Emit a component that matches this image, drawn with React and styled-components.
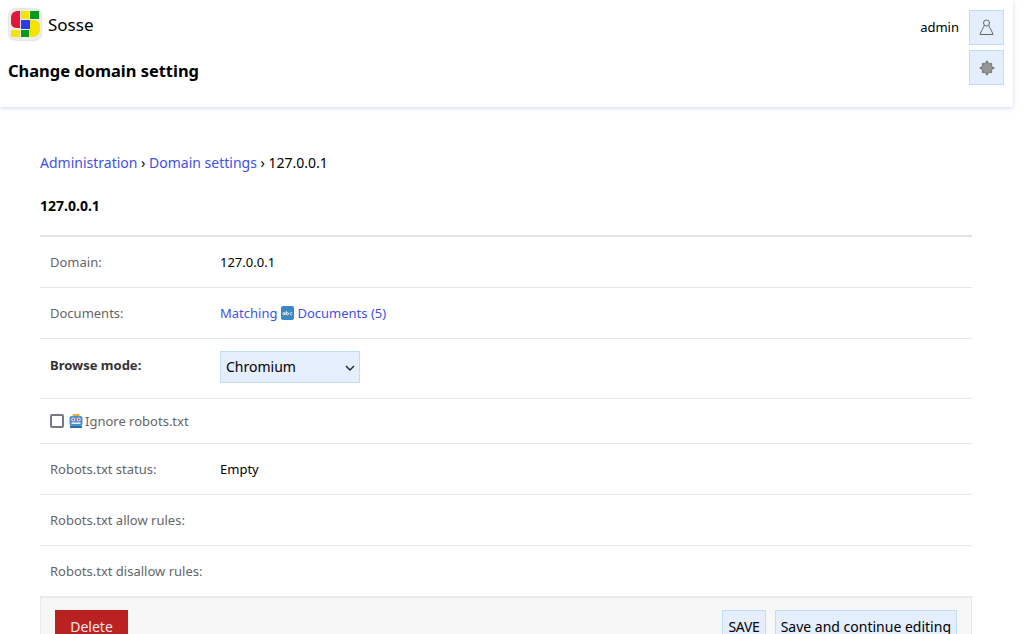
import React from "react";
import styled, { createGlobalStyle } from "styled-components";

const GlobalStyle = createGlobalStyle`
  html, body {
    margin: 0;
    height: 634px;
    overflow: hidden;
    background: #fff;
    font-family: "Noto Sans", sans-serif;
    color: #000;
  }
`;

const Page = styled.div`
  width: 1013px;
`;

const Header = styled.header`
  height: 107px;
  box-sizing: border-box;
  padding: 8px 9px 0 8px;
  display: flex;
  justify-content: space-between;
  align-items: flex-start;
  background: #fff;
  box-shadow: 0 1px 4px rgba(170, 180, 225, 0.55);
`;

const Brand = styled.div`
  display: flex;
  flex-direction: column;
`;

const BrandRow = styled.div`
  display: flex;
  align-items: center;
  gap: 6px;
  height: 32px;
  font-size: 17px;
`;

const LogoMark = styled.svg`
  filter: drop-shadow(0 0 1px #b8b8b8);
`;

const Title = styled.h1`
  margin: 20px 0 0;
  font-size: 16.45px;
  line-height: 22px;
  font-weight: 700;
`;

const Tools = styled.div`
  display: grid;
  grid-template-columns: auto 35px;
  column-gap: 10px;
  row-gap: 5px;
  align-items: center;
  margin-top: 2px;
  font-size: 13px;
`;

const UserName = styled.span`
  margin-bottom: 1px;
`;

const IconButton = styled.div`
  grid-column: 2;
  width: 35px;
  height: 35px;
  box-sizing: border-box;
  display: flex;
  align-items: center;
  justify-content: center;
  background: #e4eefd;
  border: 1px solid #bfdff0;
`;

const Main = styled.main`
  padding: 46px 41px 0 40px;
`;

const Crumbs = styled.div`
  font-size: 14px;
  line-height: 20px;
`;

const Link = styled.a`
  color: #3f51e8;
  text-decoration: none;
`;

const Subtitle = styled.h2`
  margin: 23px 0 0;
  font-size: 14px;
  line-height: 20px;
  font-weight: 700;
`;

const Form = styled.div`
  margin-top: 19px;
  border-top: 2px solid #e4e4e4;
`;

const Row = styled.div`
  display: flex;
  align-items: center;
  height: ${(p) => p.$height}px;
  box-sizing: border-box;
  padding-left: 10px;
  border-bottom: 1px solid #e8e8e8;
  font-size: 13px;
  &:last-child {
    border-bottom: none;
  }
`;

const SelectRow = styled(Row)`
  align-items: flex-start;
  padding-top: 12px;
`;

const Label = styled.div`
  width: 170px;
  flex: none;
  color: ${(p) => (p.$strong ? "#333" : "#666")};
  font-weight: ${(p) => (p.$strong ? 700 : 400)};
  margin-top: ${(p) => (p.$strong ? "5px" : "0")};
`;

const DocLink = styled(Link)`
  display: flex;
  align-items: center;
  gap: 3px;
`;

const DocIcon = styled.svg`
  margin-left: 1px;
`;

const chevron = encodeURIComponent(
  '<svg xmlns="http://www.w3.org/2000/svg" width="10" height="6"><path d="M1 1l4 4 4-4" fill="none" stroke="#222" stroke-width="1.4"/></svg>'
);

const Select = styled.select`
  appearance: none;
  width: 140px;
  height: 32px;
  box-sizing: border-box;
  padding: 0 0 2px 5px;
  font: 14px "Noto Sans", sans-serif;
  color: #000;
  background: #e4eefd url("data:image/svg+xml,${chevron}") no-repeat 124px 13px;
  border: 1px solid #bfdff0;
  border-radius: 0;
`;

const CheckLabel = styled.label`
  display: flex;
  align-items: center;
  color: #666;
`;

const Checkbox = styled.span`
  width: 14px;
  height: 14px;
  box-sizing: border-box;
  border: 2px solid #77778a;
  border-radius: 2px;
  margin-right: 5px;
`;

const Robot = styled.svg`
  margin-right: 2px;
`;

const SubmitRow = styled.div`
  display: flex;
  align-items: flex-start;
  gap: 9px;
  height: 60px;
  box-sizing: border-box;
  padding: 12px 14px 0;
  background: #f7f7f7;
  border: 1px solid #eaeaea;
  border-top-width: 2px;
`;

const DeleteButton = styled.div`
  width: 73px;
  height: 40px;
  margin-right: auto;
  box-sizing: border-box;
  padding-top: 7px;
  text-align: center;
  font-size: 14px;
  line-height: 20px;
  color: #f5e6e6;
  background: #ba2121;
`;

const SaveButton = styled.div`
  height: 40px;
  box-sizing: border-box;
  padding: 6px 5px 0;
  font-size: 14px;
  line-height: 20px;
  letter-spacing: ${(p) => (p.$tight ? "-0.25px" : "0")};
  background: #e4eefd;
  border: 1px solid #bfdff0;
`;

const Logo = () => (
  <LogoMark width="34" height="34" viewBox="0 0 34 34">
    <rect x="1" y="2" width="32" height="31" rx="7" fill="#ededed" />
    <path d="M12 4H9a6 6 0 0 0-6 6v6a5 5 0 0 0 5 5h4z" fill="#e0163c" />
    <rect x="13" y="4" width="8" height="8" fill="#f5e400" />
    <rect x="22" y="4" width="9" height="8" fill="#0a9a1a" />
    <rect x="13" y="13" width="9" height="9" fill="#2a3ee8" />
    <path d="M22 13h4a6 6 0 0 1 6 6v4a7 7 0 0 1-7 7h-3z" fill="#f5e400" />
    <rect x="3" y="23" width="9" height="7" fill="#f5e400" />
    <rect x="13" y="23" width="8" height="7" fill="#0a9a1a" />
  </LogoMark>
);

const UserIcon = () => (
  <svg width="15" height="17" viewBox="0 0 15 17" fill="none" stroke="#666" strokeWidth="1">
    <circle cx="7.5" cy="4" r="3" />
    <path d="M5.3 6.3C4.5 9 2 12 1 15.500h13C13 12 10.500 9 9.700 6.300" />
  </svg>
);

const GearIcon = () => (
  <svg width="16" height="16" viewBox="0 0 16 16">
    <path
      d="M8 0.700v14.600M0.700 8h14.600M3.200 3.200l9.600 9.600M12.800 3.200L3.200 12.800"
      stroke="#7c7c7c"
      strokeWidth="2.200"
    />
    <circle cx="8" cy="8" r="5.300" fill="#969696" stroke="#7c7c7c" strokeWidth="1" />
  </svg>
);

const AbcIcon = () => (
  <DocIcon width="13" height="14" viewBox="0 0 13 14">
    <rect width="13" height="14" rx="2" fill="#3b88c3" />
    <g stroke="#fff" strokeWidth="0.8" fill="none">
      <circle cx="2.900" cy="7.700" r="1.100" />
      <path d="M3.900 6.500v2.300M5.400 5v3.800" />
      <circle cx="6.500" cy="7.700" r="1.100" />
      <path d="M11.200 6.800a1.200 1.200 0 1 0 0 1.800" />
    </g>
  </DocIcon>
);

const RobotIcon = () => (
  <Robot width="14" height="14" viewBox="0 0 14 14">
    <rect x="3.500" y="0" width="7" height="2.500" rx="1" fill="#f4a72c" />
    <rect x="0.500" y="2" width="13" height="10" rx="2" fill="#4a90d0" />
    <circle cx="4.300" cy="5.500" r="2" fill="#f3d9d9" />
    <circle cx="9.700" cy="5.500" r="2" fill="#f3d9d9" />
    <circle cx="4.300" cy="5.500" r="0.900" fill="#c33" />
    <circle cx="9.700" cy="5.500" r="0.900" fill="#c33" />
    <rect x="2.500" y="8.500" width="9" height="1.500" fill="#e8eef5" />
    <rect x="1" y="12" width="12" height="2" fill="#2f6fa8" />
  </Robot>
);

export default function App() {
  return (
    <Page>
      <GlobalStyle />
      <Header>
        <Brand>
          <BrandRow>
            <Logo />
            Sosse
          </BrandRow>
          <Title>Change domain setting</Title>
        </Brand>
        <Tools>
          <UserName>admin</UserName>
          <IconButton>
            <UserIcon />
          </IconButton>
          <IconButton>
            <GearIcon />
          </IconButton>
        </Tools>
      </Header>
      <Main>
        <Crumbs>
          <Link href="#">Administration</Link> › <Link href="#">Domain settings</Link> › 127.0.0.1
        </Crumbs>
        <Subtitle>127.0.0.1</Subtitle>
        <Form>
          <Row $height={51}>
            <Label>Domain:</Label>
            127.0.0.1
          </Row>
          <Row $height={51}>
            <Label>Documents:</Label>
            <DocLink href="#">
              Matching <AbcIcon /> Documents (5)
            </DocLink>
          </Row>
          <SelectRow $height={60}>
            <Label $strong>Browse mode:</Label>
            <Select defaultValue="Chromium">
              <option>Chromium</option>
            </Select>
          </SelectRow>
          <Row $height={45}>
            <CheckLabel>
              <Checkbox />
              <RobotIcon />
              Ignore robots.txt
            </CheckLabel>
          </Row>
          <Row $height={51}>
            <Label>Robots.txt status:</Label>
            Empty
          </Row>
          <Row $height={51}>
            <Label>Robots.txt allow rules:</Label>
          </Row>
          <Row $height={50}>
            <Label>Robots.txt disallow rules:</Label>
          </Row>
        </Form>
        <SubmitRow>
          <DeleteButton>Delete</DeleteButton>
          <SaveButton $tight>SAVE</SaveButton>
          <SaveButton>Save and continue editing</SaveButton>
        </SubmitRow>
      </Main>
    </Page>
  );
}
